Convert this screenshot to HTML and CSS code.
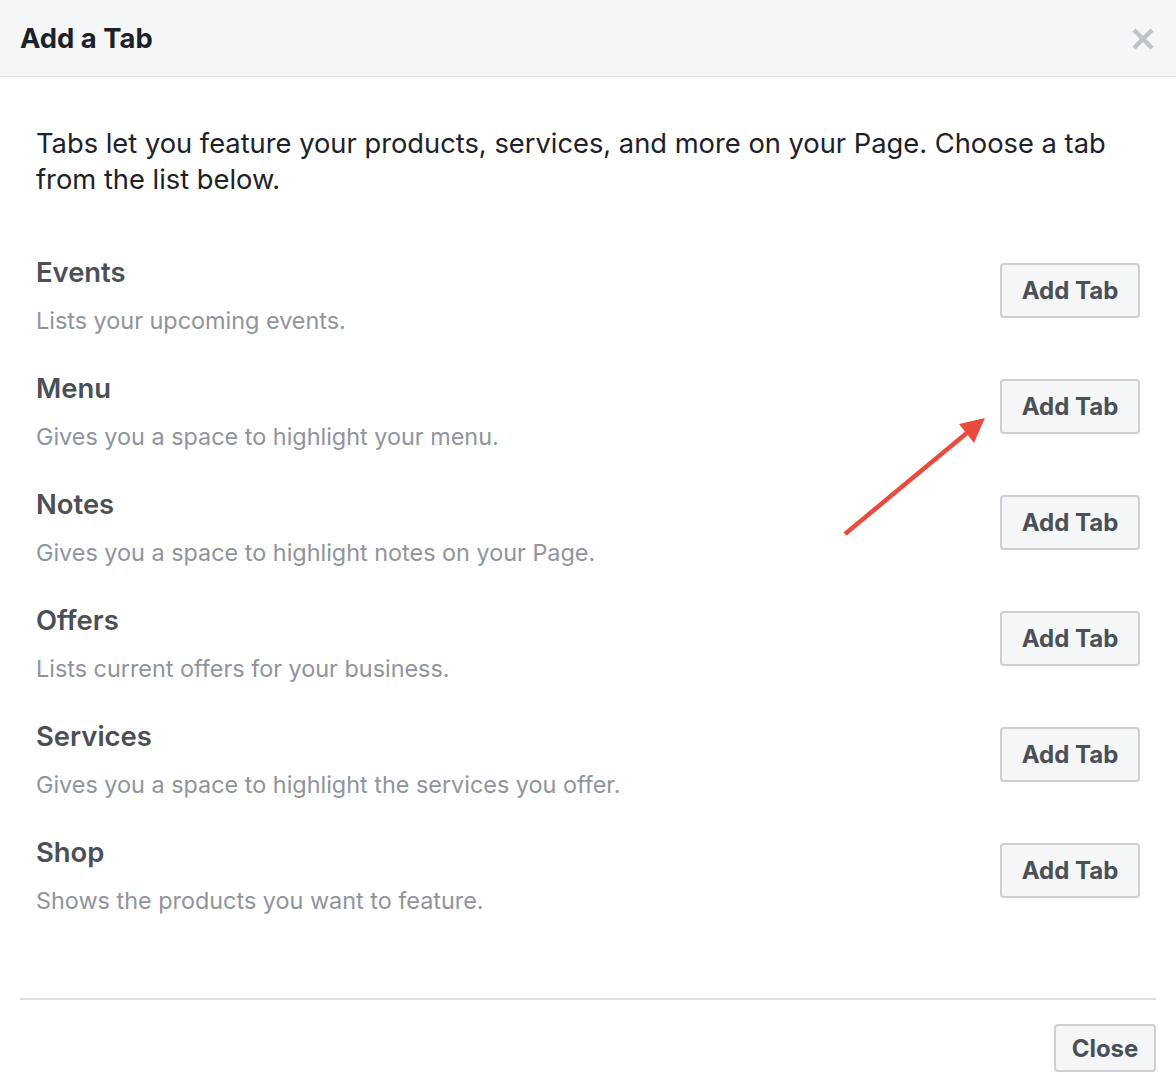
FILE: index.html
```html
<!DOCTYPE html>
<html lang="en">
<head>
    <meta charset="UTF-8">
    <meta name="viewport" content="width=device-width, initial-scale=1.0">
    <title>Add a Tab</title>
    <link rel="stylesheet" href="styles.css">
</head>
<body>
    <div class="dialog">
        <div class="dialog-header">
            <h2>Add a Tab</h2>
            <button class="close-x" aria-label="Close">
                <svg width="24" height="24" viewBox="0 0 24 24">
                    <path d="M3 3 L21 21 M21 3 L3 21" stroke="#bec2c9" stroke-width="4.5" fill="none"/>
                </svg>
            </button>
        </div>

        <div class="dialog-body">
            <p class="intro">Tabs let you feature your products, services, and more on your Page. Choose a tab from the list below.</p>

            <div class="tab-list">
                <div class="tab-item">
                    <div class="tab-info">
                        <div class="tab-name">Events</div>
                        <div class="tab-desc">Lists your upcoming events.</div>
                    </div>
                    <button class="btn">Add Tab</button>
                </div>
                <div class="tab-item">
                    <div class="tab-info">
                        <div class="tab-name">Menu</div>
                        <div class="tab-desc">Gives you a space to highlight your menu.</div>
                    </div>
                    <button class="btn">Add Tab</button>
                </div>
                <div class="tab-item">
                    <div class="tab-info">
                        <div class="tab-name">Notes</div>
                        <div class="tab-desc">Gives you a space to highlight notes on your Page.</div>
                    </div>
                    <button class="btn">Add Tab</button>
                </div>
                <div class="tab-item">
                    <div class="tab-info">
                        <div class="tab-name">Offers</div>
                        <div class="tab-desc">Lists current offers for your business.</div>
                    </div>
                    <button class="btn">Add Tab</button>
                </div>
                <div class="tab-item">
                    <div class="tab-info">
                        <div class="tab-name">Services</div>
                        <div class="tab-desc">Gives you a space to highlight the services you offer.</div>
                    </div>
                    <button class="btn">Add Tab</button>
                </div>
                <div class="tab-item">
                    <div class="tab-info">
                        <div class="tab-name">Shop</div>
                        <div class="tab-desc">Shows the products you want to feature.</div>
                    </div>
                    <button class="btn">Add Tab</button>
                </div>
            </div>
        </div>

        <div class="dialog-footer">
            <button class="btn btn-close">Close</button>
        </div>

        <!-- annotation arrow pointing at the Menu button -->
        <svg class="arrow" width="160" height="130" viewBox="0 0 160 130">
            <line x1="5" y1="125" x2="128" y2="23" stroke="#e84c3d" stroke-width="4.5"/>
            <polygon points="145,9 119,15 134,34" fill="#e84c3d"/>
        </svg>
    </div>
</body>
</html>
```

FILE: styles.css
```css
body {
    margin: 0;
    padding: 0;
    background-color: #ffffff;
    font-family: 'Inter', 'Liberation Sans', sans-serif;
}

.dialog {
    position: relative;
    width: 1176px;
    height: 1092px;
    background: #ffffff;
}

.dialog-header {
    display: flex;
    align-items: center;
    justify-content: space-between;
    height: 76px;
    padding: 0 20px 0 20px;
    background-color: #f5f6f7;
    border-bottom: 1px solid #e5e5e5;
}

.dialog-header h2 {
    margin: 0;
    font-size: 27.4px;
    font-weight: 700;
    color: #1d2129;
}

.close-x {
    border: none;
    background: none;
    padding: 0;
    margin-top: 2px;
    margin-right: 1px;
    width: 24px;
    height: 24px;
    cursor: pointer;
}

.dialog-body {
    padding: 49px 36px 0 36px;
    height: 872px;
}

.intro {
    margin: 0 0 58px 0;
    font-size: 27.3px;
    line-height: 36px;
    color: #1d2129;
}

.tab-item {
    display: flex;
    justify-content: space-between;
    align-items: flex-start;
    height: 116px;
}

.tab-name {
    font-size: 27.4px;
    font-weight: 600;
    line-height: 32px;
    color: #4b4f56;
    margin-bottom: 17px;
}

.tab-desc {
    font-size: 23.4px;
    line-height: 32px;
    color: #90949c;
}

.btn {
    font-family: 'Inter', 'Liberation Sans', sans-serif;
    font-size: 24px;
    font-weight: 700;
    color: #4b4f56;
    background-color: #f5f6f7;
    border: 2px solid #ccd0d5;
    border-radius: 4px;
    cursor: pointer;
}

.tab-item .btn {
    margin-top: 7px;
    width: 140px;
    height: 55px;
}

.dialog-footer {
    display: flex;
    justify-content: flex-end;
    margin: 0 20px;
    padding-top: 24px;
    border-top: 2px solid #dddfe2;
}

.btn-close {
    width: 102px;
    height: 48px;
}

.arrow {
    position: absolute;
    left: 840px;
    top: 409px;
}
```
